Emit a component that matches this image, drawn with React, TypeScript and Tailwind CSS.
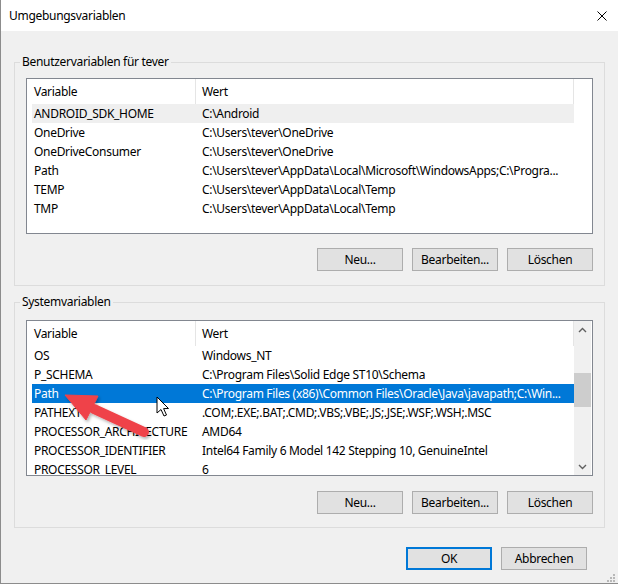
import React from "react";

type Row = { name: string; value: string; sel?: "gray" | "blue" };

const userRows: Row[] = [
  { name: "ANDROID_SDK_HOME", value: "C:\\Android", sel: "gray" },
  { name: "OneDrive", value: "C:\\Users\\tever\\OneDrive" },
  { name: "OneDriveConsumer", value: "C:\\Users\\tever\\OneDrive" },
  { name: "Path", value: "C:\\Users\\tever\\AppData\\Local\\Microsoft\\WindowsApps;C:\\Progra..." },
  { name: "TEMP", value: "C:\\Users\\tever\\AppData\\Local\\Temp" },
  { name: "TMP", value: "C:\\Users\\tever\\AppData\\Local\\Temp" },
];

const sysRows: Row[] = [
  { name: "OS", value: "Windows_NT" },
  { name: "P_SCHEMA", value: "C:\\Program Files\\Solid Edge ST10\\Schema" },
  { name: "Path", value: "C:\\Program Files (x86)\\Common Files\\Oracle\\Java\\javapath;C:\\Win...", sel: "blue" },
  { name: "PATHEXT", value: ".COM;.EXE;.BAT;.CMD;.VBS;.VBE;.JS;.JSE;.WSF;.WSH;.MSC" },
  { name: "PROCESSOR_ARCHITECTURE", value: "AMD64" },
  { name: "PROCESSOR_IDENTIFIER", value: "Intel64 Family 6 Model 142 Stepping 10, GenuineIntel" },
  { name: "PROCESSOR_LEVEL", value: "6" },
];

function Btn({ label, primary }: { label: string; primary?: boolean }) {
  return (
    <div
      className={
        primary
          ? "w-[86px] h-[23px] border-2 border-[#0078d7] bg-[#e1e1e1] flex items-center justify-center"
          : "w-[86px] h-[23px] border border-[#adadad] bg-[#e1e1e1] flex items-center justify-center"
      }
    >
      {label}
    </div>
  );
}

function Chevron({ up }: { up?: boolean }) {
  return (
    <svg width="9" height="6" viewBox="0 0 9 6">
      <path
        d={up ? "M1 5 L4.5 1.5 L8 5" : "M1 1 L4.5 4.5 L8 1"}
        fill="none"
        stroke="#606060"
        strokeWidth="1.4"
      />
    </svg>
  );
}

function ListBox({ rows, scrollbar }: { rows: Row[]; scrollbar?: boolean }) {
  return (
    <div className="h-[156px] border border-[#828790] bg-white flex overflow-hidden">
      <div className="w-[547px] pl-[5px] flex flex-col overflow-hidden shrink-0">
        <div className="h-[25px] flex shrink-0">
          <div className="w-[164px] pl-[2px] border-r border-[#e5e5e5] flex items-center shrink-0">Variable</div>
          <div className="flex-1 pl-[6px] border-r border-[#e5e5e5] flex items-center">Wert</div>
        </div>
        {rows.map((r) => (
          <div
            key={r.name}
            className={
              r.sel === "blue"
                ? "h-[19px] flex items-center shrink-0 bg-[#0078d7] text-white"
                : r.sel === "gray"
                ? "h-[19px] flex items-center shrink-0 bg-[#efefef]"
                : "h-[19px] flex items-center shrink-0"
            }
          >
            <div className="w-[164px] pl-[2px] whitespace-nowrap overflow-hidden shrink-0">{r.name}</div>
            <div className="flex-1 pl-[6px] whitespace-nowrap overflow-hidden">{r.value}</div>
          </div>
        ))}
      </div>
      {scrollbar ? (
        <div className="w-[17px] bg-[#f0f0f0] flex flex-col shrink-0">
          <div className="h-[17px] flex items-center justify-center">
            <Chevron up />
          </div>
          <div className="flex-1">
            <div className="mt-[35px] h-[34px] bg-[#cdcdcd]" />
          </div>
          <div className="h-[17px] flex items-center justify-center">
            <Chevron />
          </div>
        </div>
      ) : null}
    </div>
  );
}

export default function App() {
  return (
    <div className="relative w-[618px] h-[585px] bg-white overflow-hidden font-['Segoe_UI','Noto_Sans',sans-serif] text-[12px] tracking-[-0.3px] text-black leading-[16px]">
      <div className="w-[618px] h-[584px] bg-[#f0f0f0] border-l border-b border-[#8c8c8c] flex flex-col">
        <div className="h-[31px] bg-white flex items-center justify-between pl-[8px] pr-[11px] shrink-0">
          <span>Umgebungsvariablen</span>
          <svg width="10" height="10" viewBox="0 0 10 10">
            <path d="M0.5 0.5 L9.5 9.5 M9.5 0.5 L0.5 9.5" stroke="#000" strokeWidth="1" />
          </svg>
        </div>

        <fieldset className="ml-[13px] mt-[23px] w-[591px] border border-[#dcdcdc] px-[11px] pt-[8px] pb-[14px]">
          <legend className="-ml-[6px] px-[2px] leading-[16px]">Benutzervariablen für tever</legend>
          <ListBox rows={userRows} />
          <div className="mt-[14px] flex justify-end gap-[9px]">
            <Btn label="Neu..." />
            <Btn label="Bearbeiten..." />
            <Btn label="Löschen" />
          </div>
        </fieldset>

        <fieldset className="ml-[13px] mt-[8px] w-[591px] border border-[#dcdcdc] px-[11px] pt-[10px] pb-[13px]">
          <legend className="-ml-[6px] px-[2px] leading-[16px]">Systemvariablen</legend>
          <ListBox rows={sysRows} scrollbar />
          <div className="mt-[15px] flex justify-end gap-[9px]">
            <Btn label="Neu..." />
            <Btn label="Bearbeiten..." />
            <Btn label="Löschen" />
          </div>
        </fieldset>

        <div className="mt-[19px] pr-[31px] flex justify-end gap-[9px]">
          <Btn label="OK" primary />
          <Btn label="Abbrechen" />
        </div>
      </div>

      <svg className="absolute right-[3px] bottom-[3px]" width="9" height="9" viewBox="0 0 9 9">
        <rect x="7" y="1" width="2" height="2" fill="#b8b8b8" />
        <rect x="4" y="4" width="2" height="2" fill="#b8b8b8" />
        <rect x="7" y="4" width="2" height="2" fill="#b8b8b8" />
        <rect x="1" y="7" width="2" height="2" fill="#b8b8b8" />
        <rect x="4" y="7" width="2" height="2" fill="#b8b8b8" />
        <rect x="7" y="7" width="2" height="2" fill="#b8b8b8" />
      </svg>

      <svg className="absolute left-0 top-0 pointer-events-none" width="618" height="585" viewBox="0 0 618 585">
        <defs>
          <filter id="sh" x="-20%" y="-20%" width="140%" height="140%">
            <feDropShadow dx="1.5" dy="2" stdDeviation="1.5" floodColor="#000" floodOpacity="0.3" />
          </filter>
        </defs>
        <g filter="url(#sh)" fill="#ef4248" stroke="#ef4248">
          <line x1="144" y1="432" x2="94" y2="409" strokeWidth="10" strokeLinecap="round" />
          <polygon points="65,395 98,396 86,420" strokeWidth="1" strokeLinejoin="round" />
        </g>
        <path
          d="M157 397 L157 413 L161 409.5 L164 416 L166.5 415 L163.6 408.6 L168.5 408.5 Z"
          fill="#fff"
          stroke="#000"
          strokeWidth="1"
          strokeLinejoin="round"
        />
      </svg>
    </div>
  );
}
